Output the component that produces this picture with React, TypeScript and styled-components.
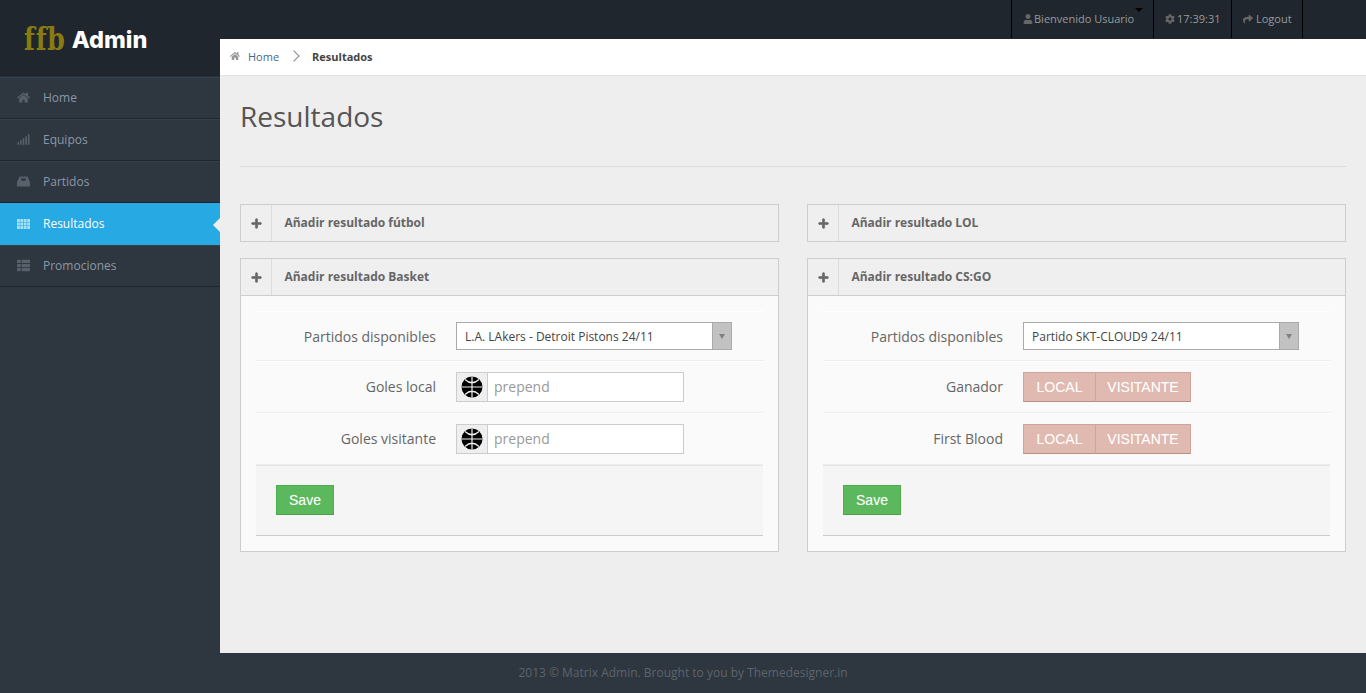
import React from "react";
import styled, { createGlobalStyle } from "styled-components";
import { FaHome, FaSignal, FaThList, FaUser, FaCog, FaShare, FaPlus } from "react-icons/fa";

const Global = createGlobalStyle`
  html, body { margin: 0; padding: 0; height: 100%; overflow: hidden; }
  body { font-family: "Open Sans", sans-serif; font-size: 12px; color: #666; background: #2e363f; }
  * { box-sizing: border-box; }
`;
const Page = styled.div`display: grid; grid-template-columns: 220px 1fr; grid-template-rows: 39px 38px 576px 40px; height: 693px; background: #2e363f;`;
const Brand = styled.div`grid-row: 1 / span 2; background: #1f262d; display: flex; align-items: center; gap: 6px; padding: 3px 0 0 24px; border-bottom: 1px solid #27303a;`;
const BrandMark = styled.span`font-family: "DejaVu Serif", serif; font-stretch: condensed; font-weight: 700; font-size: 28px; letter-spacing: 0.8px; color: #8a7a12; line-height: 1; transform: scaleY(1.15);`;
const BrandName = styled.span`font-family: "Inter", sans-serif; font-weight: 800; font-size: 23.5px; color: #fff; letter-spacing: 0;`;
const TopBar = styled.div`background: #1f262d; display: flex; justify-content: flex-end; padding-right: 63px;`;
const TopItem = styled.div<{ $w: number; $gap: number }>`width: ${p => p.$w}px; height: 38px; border-left: 1px solid #000; display: flex; align-items: center; gap: ${p => p.$gap}px; color: #9a9a9a; font-size: 11px; position: relative; padding: 0 0 1px 11px; svg { font-size: 10px; color: #666; } &:last-child { border-right: 1px solid #000; }`;
const Caret = styled.span`position: absolute; right: 10px; top: 8px; border: 4px solid transparent; border-top-color: #000; border-bottom: 0;`;
const Crumbs = styled.div`background: #fff; border-bottom: 1px solid #e3e3e3; height: 37px; display: flex; align-items: center; padding: 0 0 2px 10px; font-size: 11px; color: #666;`;
const CrumbHome = styled.span`display: flex; align-items: center; gap: 8px; color: #46688a; svg { color: #999; font-size: 10px; }`;
const CrumbArrow = styled.span`width: 8px; height: 8px; border-top: 1.5px solid #888; border-right: 1.5px solid #888; transform: rotate(45deg); margin: 0 14px 0 11px;`;
const CrumbNow = styled.strong`color: #444; font-weight: 700;`;
const Side = styled.nav`background: #2e363f; display: flex; flex-direction: column; grid-row: 3; grid-column: 1;`;
const SideItem = styled.div<{ $active?: boolean }>`height: 42px; display: flex; align-items: center; padding: 0 0 2px 17px; font-size: 12px; background: ${p => (p.$active ? "#27a9e3" : "#2e363f")}; color: ${p => (p.$active ? "#fff" : "#8a98a6")}; border-bottom: 1px solid ${p => (p.$active ? "#27a9e3" : "#1f262d")}; border-top: 1px solid ${p => (p.$active ? "#27a9e3" : "#37414b")}; position: relative;
  ${p => p.$active && `&::after { content: ""; position: absolute; right: 0; top: 14px; border: 7px solid transparent; border-right-color: #eee; border-left: 0; }`}`;
const SideIcon = styled.span<{ $active?: boolean }>`width: 26px; display: flex; align-items: center; color: ${p => (p.$active ? "#a5e0f7" : "#56616c")}; svg { width: 13px; height: 13px; }`;
const Main = styled.main`grid-row: 3; grid-column: 2; background: #eee; margin-top: -1px; padding: 0 20px; min-height: 0;`;
const Title = styled.h1`margin: 0; font-weight: 400; font-size: 28px; line-height: 38px; color: #555; padding-top: 21px; height: 91px; border-bottom: 1px solid #ddd;`;
const Grid = styled.div`display: grid; grid-template-columns: 539px 539px; column-gap: 28px; margin-top: 37px;`;
const Column = styled.div`display: flex; flex-direction: column; gap: 16px;`;
const Box = styled.section`border: 1px solid #cdcdcd; background: #fafafa;`;
const BoxHead = styled.div`height: 36px; background: #efefef; display: flex; align-items: stretch;`;
const BoxIcon = styled.span`width: 31px; padding-left: 1px; border-right: 1px solid #dcdcdc; display: flex; align-items: center; justify-content: center; color: #666; svg { font-size: 11px; stroke: currentColor; stroke-width: 30; }`;
const BoxTitle = styled.h5`margin: 0; padding-left: 12.4px; font-size: 12px; font-weight: 700; color: #666; line-height: 36px;`;
const BoxBody = styled.div`border-top: 1px solid #cdcdcd; padding: 15px 15px 15px;`;
const Row = styled.div<{ $h: number }>`display: flex; align-items: center; height: ${p => p.$h}px; border-top: 1px solid #fff; border-bottom: 1px solid #eee;`;
const Label = styled.label<{ $lift?: boolean }>`width: 180px; text-align: right; font-size: 14px; color: #666; margin-right: 20px; margin-bottom: ${p => (p.$lift ? "2px" : "0")};`;
const Select = styled.div`width: 276px; height: 28px; border: 1px solid #aaa; background: #fff; display: flex; align-items: center; justify-content: space-between; padding-left: 8px; font-size: 12px; color: #444;`;
const SelectArrow = styled.span`width: 19px; height: 100%; background: #c2c2c2; border-left: 1px solid #aaa; display: flex; align-items: center; justify-content: center; &::before { content: ""; border: 3.5px solid transparent; border-top: 5px solid #808080; border-bottom: 0; }`;
const InputGroup = styled.div`display: flex; width: 228px; height: 30px; border: 1px solid #ccc; background: #fff;`;
const Addon = styled.span`width: 31px; background: #eee; border-right: 1px solid #ccc; display: flex; align-items: center; justify-content: center;`;
const Placeholder = styled.span`padding-left: 6px; font-size: 14px; line-height: 28px; color: #999;`;
const Toggle = styled.div`display: flex; height: 30px;`;
const ToggleBtn = styled.button<{ $w: number }>`width: ${p => p.$w}px; height: 30px; padding: 0; background: #e0b9b0; border: 1px solid #cfa59b; border-bottom-color: #b98f85; color: #fff; font-family: "Liberation Sans", sans-serif; font-size: 14px; text-shadow: 0 0 1px rgba(255,255,255,.2); & + & { margin-left: -1px; }`;
const Actions = styled.div`height: 71px; background: #f5f5f5; border-top: 1px solid #e5e5e5; border-bottom: 1px solid #ccc; padding: 19px 20px;`;
const Save = styled.button`width: 58px; height: 30px; padding: 0; background: #5cb85c; border: 1px solid #4cae4c; border-bottom-color: #47a447; color: #fff; font-family: "Liberation Sans", sans-serif; font-size: 14px; text-shadow: 0 0 1px rgba(255,255,255,.2);`;
const Footer = styled.footer`grid-column: 1 / span 2; grid-row: 4; text-align: center; line-height: 40px; font-size: 12px; color: #5c656e;`;

const Ball = () => (
  <svg width="22" height="22" viewBox="0 0 22 22" aria-hidden="true">
    <circle cx="11" cy="11" r="10.5" fill="#000" />
    <path d="M11 .5V21.5M.5 11H21.5M4 3.5Q11 10 18 3.5M4 18.5Q11 12 18 18.5" fill="none" stroke="#eee" strokeWidth="1.2" />
  </svg>
);
const Inbox = () => (
  <svg viewBox="0 0 13 13" fill="currentColor" aria-hidden="true">
    <path d="M2.5 1.5h8L13 7v4.5H0V7z M4 3.5h5v1.5H8.2l-.7 1H5.5l-.7-1H4z" fillRule="evenodd" />
  </svg>
);
const Table = () => (
  <svg viewBox="0 0 13 13" fill="currentColor" aria-hidden="true">
    {[2, 5.5, 9].map(y => [0, 3.4, 6.8, 10.2].map(x => <rect key={`${x}-${y}`} x={x} y={y} width="2.8" height="3" />))}
  </svg>
);

const Head = ({ title }: { title: string }) => (
  <BoxHead><BoxIcon><FaPlus /></BoxIcon><BoxTitle>{title}</BoxTitle></BoxHead>
);
const SelectRow = ({ value }: { value: string }) => (
  <Row $h={50}><Label>Partidos disponibles</Label><Select>{value}<SelectArrow /></Select></Row>
);
const PrependRow = ({ label }: { label: string }) => (
  <Row $h={52}><Label $lift>{label}</Label><InputGroup><Addon><Ball /></Addon><Placeholder>prepend</Placeholder></InputGroup></Row>
);
const ToggleRow = ({ label }: { label: string }) => (
  <Row $h={52}><Label $lift>{label}</Label><Toggle><ToggleBtn $w={73}>LOCAL</ToggleBtn><ToggleBtn $w={96}>VISITANTE</ToggleBtn></Toggle></Row>
);
const menu = [
  { icon: <FaHome />, label: "Home" },
  { icon: <FaSignal />, label: "Equipos" },
  { icon: <Inbox />, label: "Partidos" },
  { icon: <Table />, label: "Resultados", active: true },
  { icon: <FaThList />, label: "Promociones" },
];

export default function App() {
  return (
    <Page>
      <Global />
      <Brand><BrandMark>ffb</BrandMark><BrandName>Admin</BrandName></Brand>
      <TopBar>
        <TopItem $w={142} $gap={1}><FaUser /> Bienvenido Usuario<Caret /></TopItem>
        <TopItem $w={78} $gap={2}><FaCog /> 17:39:31</TopItem>
        <TopItem $w={72} $gap={3}><FaShare /> Logout</TopItem>
      </TopBar>
      <Crumbs>
        <CrumbHome><FaHome />Home</CrumbHome><CrumbArrow /><CrumbNow>Resultados</CrumbNow>
      </Crumbs>
      <Side>
        {menu.map(m => <SideItem key={m.label} $active={m.active}><SideIcon $active={m.active}>{m.icon}</SideIcon>{m.label}</SideItem>)}
      </Side>
      <Main>
        <Title>Resultados</Title>
        <Grid>
          <Column>
            <Box><Head title="Añadir resultado fútbol" /></Box>
            <Box>
              <Head title="Añadir resultado Basket" />
              <BoxBody>
                <SelectRow value="L.A. LAkers - Detroit Pistons 24/11" />
                <PrependRow label="Goles local" />
                <PrependRow label="Goles visitante" />
                <Actions><Save>Save</Save></Actions>
              </BoxBody>
            </Box>
          </Column>
          <Column>
            <Box><Head title="Añadir resultado LOL" /></Box>
            <Box>
              <Head title="Añadir resultado CS:GO" />
              <BoxBody>
                <SelectRow value="Partido SKT-CLOUD9 24/11" />
                <ToggleRow label="Ganador" />
                <ToggleRow label="First Blood" />
                <Actions><Save>Save</Save></Actions>
              </BoxBody>
            </Box>
          </Column>
        </Grid>
      </Main>
      <Footer>2013 © Matrix Admin. Brought to you by Themedesigner.in</Footer>
    </Page>
  );
}
